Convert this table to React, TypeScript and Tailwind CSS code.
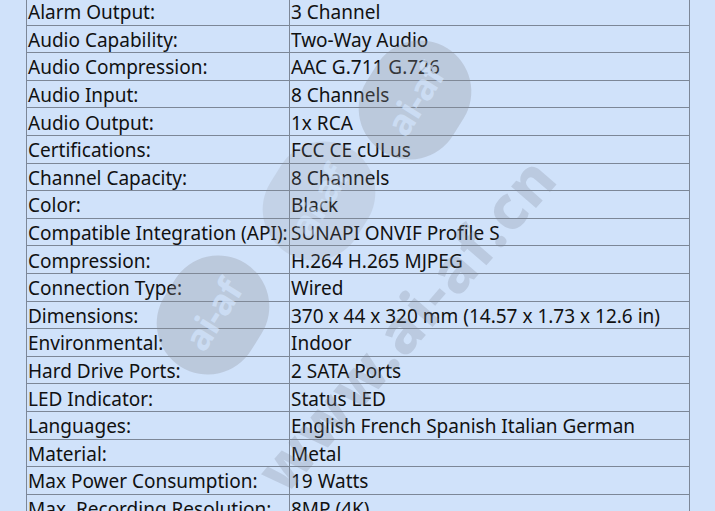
import React from 'react'

const specs: [string, string][] = [
  ['Alarm Output:', '3 Channel'],
  ['Audio Capability:', 'Two-Way Audio'],
  ['Audio Compression:', 'AAC G.711 G.726'],
  ['Audio Input:', '8 Channels'],
  ['Audio Output:', '1x RCA'],
  ['Certifications:', 'FCC CE cULus'],
  ['Channel Capacity:', '8 Channels'],
  ['Color:', 'Black'],
  ['Compatible Integration (API):', 'SUNAPI ONVIF Profile S'],
  ['Compression:', 'H.264 H.265 MJPEG'],
  ['Connection Type:', 'Wired'],
  ['Dimensions:', '370 x 44 x 320 mm (14.57 x 1.73 x 12.6 in)'],
  ['Environmental:', 'Indoor'],
  ['Hard Drive Ports:', '2 SATA Ports'],
  ['LED Indicator:', 'Status LED'],
  ['Languages:', 'English French Spanish Italian German'],
  ['Material:', 'Metal'],
  ['Max Power Consumption:', '19 Watts'],
  ['Max. Recording Resolution:', '8MP (4K)'],
]

// watermark logo: grey ellipse with the letters cut out in the page colour
function Badge({ className }: { className: string }) {
  return (
    <div
      className={`absolute w-[122px] h-[102px] -rotate-[58deg] rounded-full bg-[#8a8f99]/30 flex items-center justify-center ${className}`}
    >
      <span className="text-[36px] font-bold text-[#d0e2fa]/80 tracking-tight">ai-af</span>
    </div>
  )
}

export default function App() {
  return (
    <main
      className="relative w-[715px] h-[511px] overflow-hidden bg-[#d0e2fa] text-[#111] text-[19px]"
      style={{ fontFamily: '"Noto Sans", "Open Sans", Arial, sans-serif' }}
    >
      <table className="ml-[26px] mt-[-3px] w-[664px] border-collapse">
        <tbody>
          {specs.map(([label, value]) => (
            <tr key={label} className="h-[27.6px]">
              <td className="w-[263px] border border-[#7c8797] px-[1px] pt-[2px] pb-0 leading-[24px] whitespace-nowrap">
                {label}
              </td>
              <td className="border border-[#7c8797] px-[1px] pt-[2px] pb-0 leading-[24px] whitespace-nowrap">
                {value}
              </td>
            </tr>
          ))}
        </tbody>
      </table>

      {/* watermark */}
      <div className="pointer-events-none absolute inset-0">
        <Badge className="left-[354px] top-[49px]" />
        <Badge className="left-[258px] top-[150px] opacity-60" />
        <Badge className="left-[152px] top-[264px]" />
        <div className="absolute left-[196px] top-[278px] -rotate-[49deg] origin-center text-[60px] font-extrabold text-[#7d8593]/25 tracking-[2px] whitespace-nowrap">
          www.ai-af.cn
        </div>
      </div>
    </main>
  )
}
